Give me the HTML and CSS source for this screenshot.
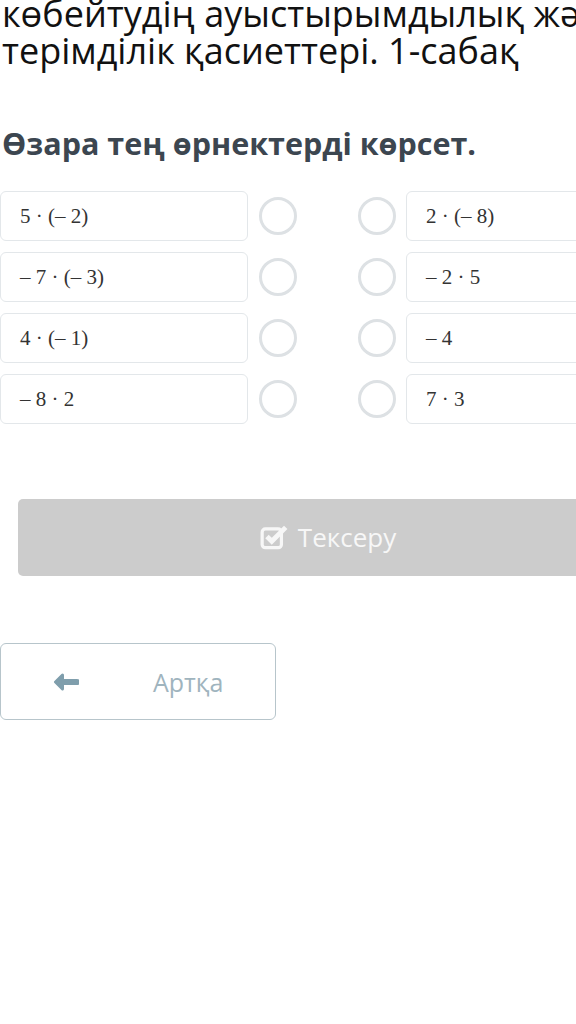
FILE: index.html
```html
<!DOCTYPE html>
<html lang="kk">
<head>
    <meta charset="UTF-8">
    <meta name="viewport" content="width=device-width, initial-scale=1.0">
    <title>Тексеру</title>
    <link rel="stylesheet" href="styles.css">
</head>
<body>
    <div class="page">
        <h1 class="lesson-title">көбейтудің ауыстырымдылық және<br>терімділік қасиеттері. 1-сабақ</h1>

        <h2 class="question">Өзара тең өрнектерді көрсет.</h2>

        <!-- Matching pairs -->
        <div class="pairs">
            <div class="pair-row">
                <div class="option">5 · (– 2)</div>
                <span class="dot"></span>
                <span class="dot dot-right"></span>
                <div class="option">2 · (– 8)</div>
            </div>
            <div class="pair-row">
                <div class="option">– 7 · (– 3)</div>
                <span class="dot"></span>
                <span class="dot dot-right"></span>
                <div class="option">– 2 · 5</div>
            </div>
            <div class="pair-row">
                <div class="option">4 · (– 1)</div>
                <span class="dot"></span>
                <span class="dot dot-right"></span>
                <div class="option">– 4</div>
            </div>
            <div class="pair-row">
                <div class="option">– 8 · 2</div>
                <span class="dot"></span>
                <span class="dot dot-right"></span>
                <div class="option">7 · 3</div>
            </div>
        </div>

        <button class="check-btn" disabled>
            <svg class="check-icon" viewBox="0 0 28 24" width="30" height="26">
                <rect x="2" y="4.5" width="18" height="17.5" rx="3" fill="none" stroke="#f7f7f7" stroke-width="3"/>
                <path d="M6.5 11.5 L11 16 L24 3" fill="none" stroke="#f7f7f7" stroke-width="4.5" stroke-linejoin="miter"/>
            </svg>
            Тексеру
        </button>

        <button class="back-btn">
            <svg class="back-icon" viewBox="0 0 26 18" width="26" height="18">
                <path d="M9.5 2 L2.5 9 L9.5 16 Z" fill="#7f9eac" stroke="#7f9eac" stroke-width="3" stroke-linejoin="round"/>
                <path d="M6 9 H24" fill="none" stroke="#7f9eac" stroke-width="6" stroke-linecap="round"/>
            </svg>
            <span>Артқа</span>
        </button>
    </div>
</body>
</html>
```

FILE: styles.css
```css
html, body {
    margin: 0;
    padding: 0;
    background-color: #fff;
    overflow: hidden;
}

.page {
    width: 656px;
    font-family: "Open Sans", Arial, sans-serif;
}

.lesson-title {
    margin: -5px 0 0 2px;
    font-size: 36px;
    line-height: 37px;
    font-weight: 400;
    color: #111;
    white-space: nowrap;
}

.question {
    margin: 55px 0 0 2px;
    font-size: 30.5px;
    line-height: 38px;
    font-weight: 700;
    color: #3c4650;
}

/* Options grid */
.pairs {
    margin-top: 29px;
    display: flex;
    flex-direction: column;
    gap: 11px;
}

.pair-row {
    display: flex;
    align-items: center;
}

.option {
    width: 248px;
    height: 50px;
    box-sizing: border-box;
    border: 1px solid #e3e7ea;
    border-radius: 6px;
    padding: 0 19px;
    display: flex;
    align-items: center;
    font-family: "Liberation Serif", "DejaVu Serif", serif;
    font-size: 21px;
    color: #333;
    white-space: nowrap;
}

.dot {
    width: 38px;
    height: 38px;
    box-sizing: border-box;
    border: 3px solid #dde1e4;
    border-radius: 50%;
    margin-left: 11px;
}

.dot-right {
    margin-left: 61px;
    margin-right: 10px;
}

/* Buttons */
.check-btn {
    display: flex;
    align-items: center;
    justify-content: center;
    gap: 8px;
    margin: 75px 18px 0 18px;
    width: 620px;
    height: 77px;
    border: none;
    border-radius: 5px;
    background-color: #cccccc;
    color: #f7f7f7;
    font-family: "Open Sans", Arial, sans-serif;
    font-size: 26px;
    padding: 0 0 2px 0;
}

.check-icon {
    margin-top: 0;
}

.back-btn {
    display: flex;
    align-items: center;
    margin-top: 67px;
    width: 276px;
    height: 77px;
    box-sizing: border-box;
    background: #fff;
    border: 1px solid #b7c5cb;
    border-radius: 6px;
    padding: 0 0 0 52px;
    font-family: "Open Sans", Arial, sans-serif;
    font-size: 25px;
    color: #9fb4be;
    cursor: pointer;
}

.back-btn span {
    margin-left: 74px;
}
```
